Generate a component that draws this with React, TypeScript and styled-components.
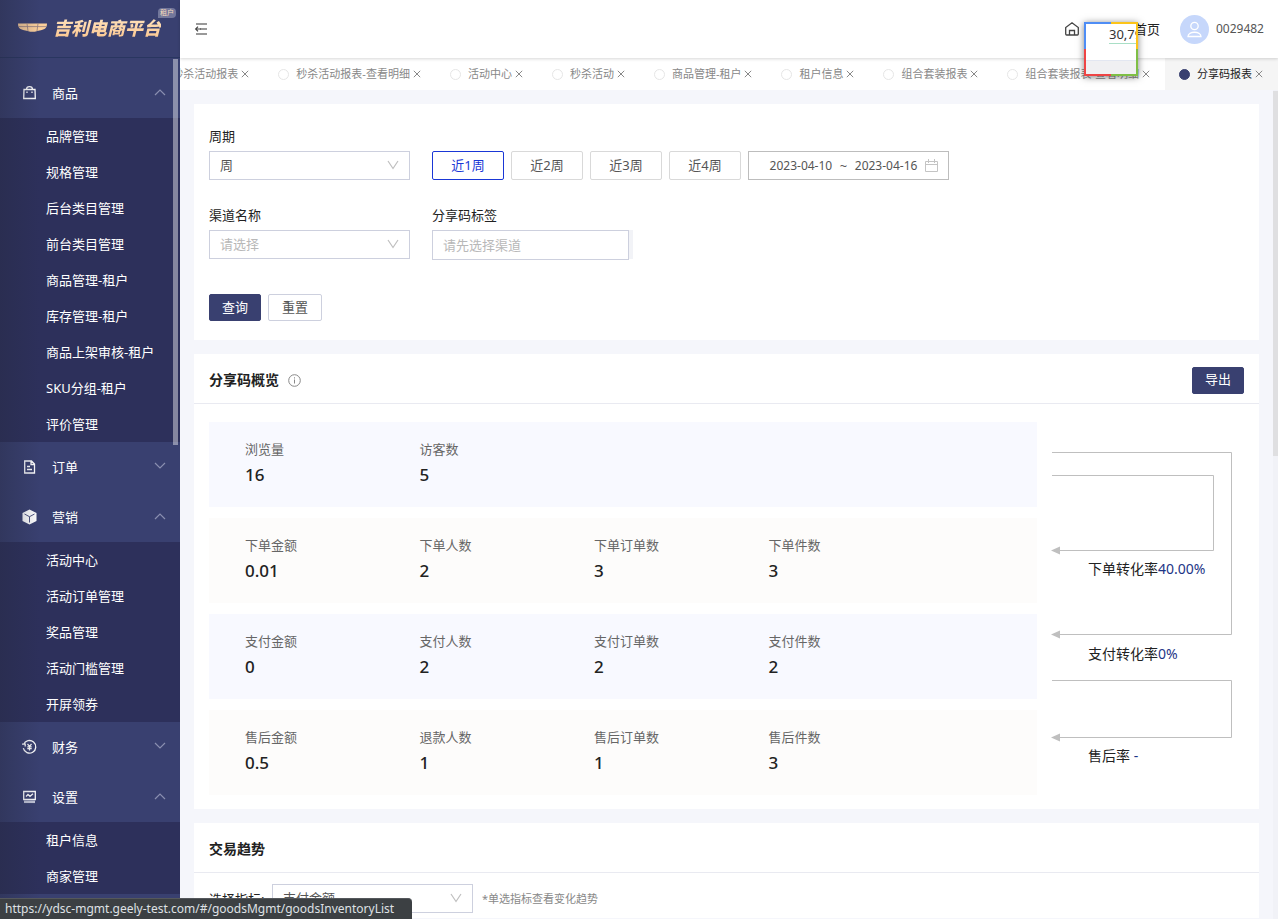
import React from 'react';
import styled, { createGlobalStyle, css } from 'styled-components';

const GlobalStyle = createGlobalStyle`
  *, *::before, *::after { box-sizing: border-box; }
  body {
    margin: 0;
    font-family: "Noto Sans", "Noto Sans CJK SC", sans-serif;
    font-size: 13px;
    line-height: 20px;
    color: #222;
    background: #f5f6fb;
  }
  button, input, select { font: inherit; margin: 0; }
  h1, h2, ul, dl, dd, dt { margin: 0; padding: 0; font: inherit; }
  ul { list-style: none; }
`;

const Shell = styled.div`
  display: flex;
  height: 100vh;
  overflow: hidden;
`;

/* ---------- Sidebar ---------- */

const Sidebar = styled.aside`
  position: relative;
  flex: none;
  width: 180px;
  overflow: hidden;
  background: #394070;
  color: #fff;
  &::after {
    content: "";
    position: absolute;
    inset: 0 auto 0 0;
    width: 40px;
    background: linear-gradient(90deg, rgba(38, 42, 66, 0.4), rgba(38, 42, 66, 0));
    pointer-events: none;
  }
`;

const Brand = styled.div`
  position: relative;
  display: flex;
  align-items: center;
  gap: 5px;
  height: 58px;
  padding: 0 0 2px 17px;
  border-bottom: 1px solid #293660;
`;

const BrandName = styled.h1`
  font-size: 18px;
  line-height: 26px;
  font-weight: 900;
  font-style: italic;
  white-space: nowrap;
  background: linear-gradient(180deg, #ffe6c4, #fbc48b);
  background-clip: text;
  -webkit-background-clip: text;
  color: transparent;
`;

const BrandBadge = styled.span`
  position: absolute;
  top: 8px;
  right: 4px;
  padding: 0 2px;
  border-radius: 4px 4px 4px 0;
  background: #72779b;
  color: #fbdcbb;
  font-size: 7px;
  line-height: 10px;
`;

const Menu = styled.nav`
  padding-top: 10px;
`;

const GroupButton = styled.button`
  display: flex;
  align-items: center;
  width: 100%;
  height: 50px;
  padding: 0 14px 0 22px;
  border: 0;
  background: transparent;
  color: #fff;
  text-align: left;
`;

const GroupName = styled.span`
  flex: 1;
  padding-left: 15px;
`;

const SubMenu = styled.ul`
  background: #2d305b;
`;

const SubLink = styled.a`
  display: block;
  padding-left: 46px;
  line-height: 36px;
  color: #fff;
  text-decoration: none;
  white-space: nowrap;
`;

const ScrollThumb = styled.span<{ $dark?: boolean }>`
  position: absolute;
  z-index: 1;
  width: 5px;
  ${(p) =>
    p.$dark
      ? css`
          top: 1px;
          right: 0;
          height: 44%;
          background: #dfdfe1;
        `
      : css`
          top: 59px;
          right: 2px;
          height: 42%;
          background: rgba(255, 255, 255, 0.42);
        `}
`;

/* ---------- Header and tabs ---------- */

const Page = styled.div`
  display: flex;
  flex: 1;
  flex-direction: column;
  min-width: 0;
`;

const TopBar = styled.header`
  position: relative;
  z-index: 1;
  display: flex;
  flex: none;
  align-items: center;
  height: 58px;
  padding: 0 14px;
  background: #fff;
  box-shadow: 0 1px 3px rgba(0, 0, 0, 0.16);
`;

const IconButton = styled.button`
  display: flex;
  margin-right: auto;
  padding: 0;
  border: 0;
  background: none;
`;

const HomeLink = styled.a`
  display: flex;
  align-items: center;
  justify-content: space-between;
  width: 96px;
  margin-right: 20px;
  color: #222;
  text-decoration: none;
`;

const Avatar = styled.span`
  display: flex;
  align-items: center;
  justify-content: center;
  width: 29px;
  height: 29px;
  margin-right: 7px;
  border-radius: 50%;
  background: #c6d7fb;
`;

const UserName = styled.span`
  font-size: 12px;
  color: #555;
`;

const TabBar = styled.ul`
  display: flex;
  flex: none;
  justify-content: flex-end;
  height: 32px;
  overflow: hidden;
  background: #fff;
`;

const Tab = styled.li<{ $active?: boolean }>`
  display: flex;
  flex: none;
  align-items: center;
  padding: 0 15px 0 14px;
  font-size: 11px;
  color: ${(p) => (p.$active ? '#222' : '#888')};
  background: ${(p) => (p.$active ? '#f5f5f5' : 'transparent')};
  &::before {
    content: "";
    width: 11px;
    height: 11px;
    margin-right: 7px;
    border: 1px solid ${(p) => (p.$active ? '#394070' : '#e6e6e6')};
    border-radius: 50%;
    background: ${(p) => (p.$active ? '#394070' : '#fff')};
  }
`;

const TabClose = styled.button`
  display: flex;
  margin-left: 3px;
  padding: 0;
  border: 0;
  background: none;
`;

/* ---------- Content ---------- */

const ContentFrame = styled.div`
  position: relative;
  flex: 1;
  min-height: 0;
  padding-right: 5px;
  background: #f1f2f7;
`;

const Content = styled.main`
  display: flex;
  flex-direction: column;
  gap: 14px;
  height: 100%;
  padding: 14px;
  overflow: hidden;
  background: #f5f6fb;
`;

const Card = styled.section`
  flex: none;
  background: #fff;
`;

const FilterForm = styled.form`
  display: flex;
  flex-direction: column;
  gap: 25px;
  padding: 22px 15px 19px;
`;

const FieldRow = styled.div`
  display: flex;
  align-items: flex-end;
  gap: 22px;
`;

const Field = styled.div`
  display: flex;
  flex-direction: column;
  gap: 5px;
  width: 201px;
`;

const Label = styled.label`
  color: #222;
`;

const SelectBox = styled.div`
  position: relative;
  width: 201px;
  svg {
    position: absolute;
    top: 9px;
    right: 11px;
    pointer-events: none;
  }
`;

const Select = styled.select<{ $empty?: boolean }>`
  appearance: none;
  display: block;
  width: 100%;
  height: 29px;
  padding: 0 10px 1px;
  border: 1px solid #cdd0de;
  border-radius: 0;
  background: #fff;
  color: ${(p) => (p.$empty ? '#b8b8b8' : '#555')};
`;

const DisabledWrap = styled.div`
  height: 29px;
  padding-right: 4px;
  background: #f2f3f7;
`;

const TextInput = styled.input`
  display: block;
  width: 100%;
  height: 30px;
  padding: 0 10px 1px;
  border: 1px solid #cdd0de;
  border-radius: 0;
  background: #fff;
  &::placeholder { color: #b8b8b8; opacity: 1; }
`;

const QuickRange = styled.div`
  display: flex;
  gap: 7px;
`;

const RangeButton = styled.button<{ $active?: boolean }>`
  width: 72px;
  height: 29px;
  padding: 0 0 2px;
  border: 1px solid ${(p) => (p.$active ? '#1a37d6' : '#d9d9d9')};
  border-radius: 2px;
  background: #fff;
  color: ${(p) => (p.$active ? '#1a37d6' : '#555')};
`;

const DateRange = styled.div`
  display: flex;
  align-items: center;
  width: 201px;
  height: 29px;
  padding: 0 10px 0 13px;
  border: 1px solid #bdbdbd;
  color: #555;
`;

const DateInput = styled.input`
  flex: 1;
  width: 0;
  padding: 0;
  border: 0;
  background: none;
  color: inherit;
  font-size: 12px;
  text-align: center;
`;

const Actions = styled.div`
  display: flex;
  gap: 7px;
  padding-top: 10px;
`;

const ActionButton = styled.button<{ $primary?: boolean }>`
  height: 27px;
  padding: 0 ${(p) => (p.$primary ? 12 : 13)}px 2px;
  border: 1px solid ${(p) => (p.$primary ? '#394070' : '#cdd0de')};
  border-radius: 2px;
  background: ${(p) => (p.$primary ? '#394070' : '#fff')};
  color: ${(p) => (p.$primary ? '#fff' : '#555')};
  line-height: 20px;
`;

const CardHeader = styled.header`
  display: flex;
  align-items: center;
  gap: 9px;
  height: 50px;
  padding: 3px 15px 0;
  border-bottom: 1px solid #e9eaf1;
  ${ActionButton} { margin-left: auto; }
`;

const CardTitle = styled.h2`
  font-size: 14px;
  font-weight: 600;
`;

const Overview = styled.div`
  display: flex;
  gap: 15px;
  padding: 18px 12px 14px 15px;
`;

const StatRows = styled.div`
  display: flex;
  flex: 1;
  flex-direction: column;
  gap: 11px;
`;

const StatRow = styled.dl<{ $warm?: boolean }>`
  display: grid;
  grid-template-columns: repeat(4, 1fr);
  align-content: center;
  height: 85px;
  padding: 0 94px 2px 36px;
  background: ${(p) => (p.$warm ? '#fdfcfb' : '#f8f9ff')};
`;

const StatLabel = styled.dt`
  color: #666;
`;

const StatValue = styled.dd`
  padding-top: 2px;
  font-size: 17px;
  line-height: 28px;
  font-weight: 500;
`;

const Funnel = styled.svg`
  flex: none;
  width: 195px;
  height: 373px;
  overflow: visible;
`;

const TrendForm = styled.div`
  display: flex;
  align-items: center;
  padding: 11px 15px 5px;
`;

const Hint = styled.span`
  padding-left: 9px;
  font-size: 11px;
  color: #888;
`;

const TrendLabel = styled(Label)`
  width: 63px;
`;

/* ---------- Overlays ---------- */

const Magnifier = styled.div`
  position: fixed;
  z-index: 3;
  top: 22px;
  right: 140px;
  width: 54px;
  height: 54px;
  padding: 2px;
  background: conic-gradient(#fcc419 0 25%, #7fbf45 0 50%, #ee4444 0 75%, #4e8df5 0);
  box-shadow: 0 1px 7px rgba(0, 0, 0, 0.5);
`;

const MagnifierView = styled.div`
  height: 50px;
  padding-left: 23px;
  overflow: hidden;
  background: linear-gradient(#fff 36px, #e3e7f1 36px 37px, #f0f0f2 37px);
`;

const MagnifierText = styled.div`
  height: 20px;
  border-bottom: 1px solid #a9dfc6;
  color: #333;
  font-size: 13px;
`;

const StatusBar = styled.div`
  position: fixed;
  z-index: 3;
  bottom: 0;
  left: 0;
  padding: 0 18px 1px 5px;
  border-radius: 0 4px 0 0;
  border-top: 1px solid #55585c;
  background: #3c4043;
  color: #dfe1e5;
  font-size: 12px;
  line-height: 19px;
`;

/* ---------- Icons ---------- */

const Chevron = ({ up, color = '#8a8fb0' }: { up?: boolean; color?: string }) => (
  <svg width="12" height="12" viewBox="0 0 12 12" fill="none" stroke={color} strokeWidth="1.2">
    <path d={up ? 'M1 8 6 3 11 8' : 'M1 2 6 7 11 2'} />
  </svg>
);

const SelectArrow = () => (
  <svg width="12" height="10" viewBox="0 0 12 10" fill="none" stroke="#bfbfbf" strokeWidth="1.2">
    <path d="M1 1 6 8.5 11 1" />
  </svg>
);

const CloseIcon = () => (
  <svg width="8" height="8" viewBox="0 0 8 8" fill="none" stroke="#888" strokeWidth="1">
    <path d="M.8 .8 7.200 7.200M7.200 .8 .8 7.200" />
  </svg>
);

const LogoMark = () => (
  <svg width="31" height="12" viewBox="0 0 31 12">
    <path d="M1 1.5H30C30 5 28.5 7.500 24 8.200 20 8.800 19 9.800 15.500 9.800 12 9.800 11 8.800 7 8.200 2.500 7.500 1 5 1 1.500Z" fill="#fbcf9b" />
    <path d="M1.500 4.600H29.500M10 1.500 11 9M21 1.500 20 9" stroke="#8f7b7d" strokeWidth=".8" fill="none" />
  </svg>
);

const groupIcons: Record<string, React.ReactNode> = {
  goods: (
    <svg width="15" height="16" viewBox="0 0 15 16" fill="none" stroke="#fff" strokeWidth="1.3">
      <path d="M2 4.500H13L13.300 13.500H1.700ZM4.500 4.300C4.500 .700 10.500 .700 10.500 4.300" />
      <path d="M5 6.500V8M10 6.500V8" />
    </svg>
  ),
  order: (
    <svg width="15" height="16" viewBox="0 0 15 16" fill="none" stroke="#fff" strokeWidth="1.300">
      <path d="M2.700 2H9.500L12.500 5V14H2.700ZM9 2V5.500H12.500M5 7.500H8M5 10.500H10" />
    </svg>
  ),
  marketing: (
    <svg width="15" height="16" viewBox="0 0 15 16">
      <path d="M7.500 .500 14.500 4V12L7.500 15.500.500 12V4Z" fill="#fff" />
      <path d="M2.500 5 7.500 7.700 12.500 5M7.500 7.700V13.500" fill="none" stroke="#394070" strokeWidth=".9" />
    </svg>
  ),
  finance: (
    <svg width="15" height="16" viewBox="0 0 15 16" fill="none" stroke="#fff" strokeWidth="1.300">
      <path d="M1.600 5.500A6.300 6.300 0 1 1 1.300 9.200M0 5.200H3.200V7.500" />
      <path d="M5.500 5 7.500 7.300 9.500 5M5.300 7.800H9.700M5.300 9.700H9.700M7.500 7.300V11.500" strokeWidth="1.200" />
    </svg>
  ),
  settings: (
    <svg width="15" height="16" viewBox="0 0 15 16" fill="none" stroke="#fff" strokeWidth="1.300">
      <path d="M1.700 2.500H13.300V10.500H1.700ZM4 7.500 6 5.500 8 7.300 11 4.800" />
      <path d="M2 12.800H13" stroke="#c3c6d8" strokeWidth="2.500" />
    </svg>
  ),
};

/* ---------- Data ---------- */

const menu = [
  {
    name: '商品',
    icon: 'goods',
    items: ['品牌管理', '规格管理', '后台类目管理', '前台类目管理', '商品管理-租户', '库存管理-租户', '商品上架审核-租户', 'SKU分组-租户', '评价管理'],
  },
  { name: '订单', icon: 'order', items: [] },
  { name: '营销', icon: 'marketing', items: ['活动中心', '活动订单管理', '奖品管理', '活动门槛管理', '开屏领券'] },
  { name: '财务', icon: 'finance', items: [] },
  { name: '设置', icon: 'settings', items: ['租户信息', '商家管理'] },
];

const tabs = [
  '秒杀活动报表', '秒杀活动报表-查看明细', '活动中心', '秒杀活动', '商品管理-租户',
  '租户信息', '组合套装报表', '组合套装报表-查看明细', '分享码报表',
];

const ranges = ['近1周', '近2周', '近3周', '近4周'];

const stats: [string, string][][] = [
  [['浏览量', '16'], ['访客数', '5']],
  [['下单金额', '0.01'], ['下单人数', '2'], ['下单订单数', '3'], ['下单件数', '3']],
  [['支付金额', '0'], ['支付人数', '2'], ['支付订单数', '2'], ['支付件数', '2']],
  [['售后金额', '0.5'], ['退款人数', '1'], ['售后订单数', '1'], ['售后件数', '3']],
];

const ConversionFunnel = () => (
  <Funnel viewBox="0 0 195 373" fontSize="14" fill="#222">
    <path
      d="M0 30.500H179.500V212.500H8M0 53.500H161.500V128.500H8M0 258.500H179.500V315.500H8"
      fill="none"
      stroke="#bfbfbf"
    />
    <path d="M-1 128.500 8 124.500V132.500ZM-1 212.500 8 208.500V216.500ZM-1 315.500 8 311.500V319.500Z" fill="#bfbfbf" />
    <text x="36" y="152">下单转化率<tspan fill="#1d3586">40.00%</tspan></text>
    <text x="36" y="237">支付转化率<tspan fill="#1d3586">0%</tspan></text>
    <text x="36" y="339">售后率<tspan fill="#1d3586"> -</tspan></text>
  </Funnel>
);

export default function App() {
  return (
    <>
      <GlobalStyle />
      <Shell>
        <Sidebar>
          <Brand>
            <LogoMark />
            <BrandName>吉利电商平台</BrandName>
            <BrandBadge>租户</BrandBadge>
          </Brand>
          <Menu>
            {menu.map((group) => (
              <div key={group.name}>
                <GroupButton type="button">
                  {groupIcons[group.icon]}
                  <GroupName>{group.name}</GroupName>
                  <Chevron up={group.items.length > 0} />
                </GroupButton>
                {group.items.length > 0 && (
                  <SubMenu>
                    {group.items.map((item) => (
                      <li key={item}>
                        <SubLink href="#">{item}</SubLink>
                      </li>
                    ))}
                  </SubMenu>
                )}
              </div>
            ))}
          </Menu>
          <ScrollThumb />
        </Sidebar>

        <Page>
          <TopBar>
            <IconButton type="button" aria-label="收起菜单">
              <svg width="14" height="14" viewBox="0 0 14 14" fill="none">
                <path d="M2 2H13M6 7H13M2 12H13" stroke="#999" strokeWidth="2" />
                <path d="M1.500 7H7M4 4.700 1.700 7 4 9.300" stroke="#444" strokeWidth="1.200" />
              </svg>
            </IconButton>
            <HomeLink href="#">
              <svg width="16" height="16" viewBox="0 0 16 16" fill="none" stroke="#444" strokeWidth="1.300">
                <path d="M1.700 13V6.500L8 1.800 14.300 6.500V13Q14.300 14 13.300 14H2.700Q1.700 14 1.700 13ZM5.500 14V9.500H10.500V14" />
              </svg>
              首页
            </HomeLink>
            <Avatar>
              <svg width="17" height="17" viewBox="0 0 17 17" fill="none" stroke="#fff" strokeWidth="1.300">
                <circle cx="8.500" cy="5" r="3.700" />
                <path d="M2 15.500C2 9.800 15 9.800 15 15.500Z" />
              </svg>
            </Avatar>
            <UserName>0029482</UserName>
          </TopBar>

          <TabBar>
            {tabs.map((tab, i) => (
              <Tab key={tab} $active={i === tabs.length - 1}>
                {tab}
                <TabClose type="button" aria-label="关闭">
                  <CloseIcon />
                </TabClose>
              </Tab>
            ))}
          </TabBar>

          <ContentFrame>
            <Content>
              <Card>
                <FilterForm>
                  <FieldRow>
                    <Field>
                      <Label htmlFor="period">周期</Label>
                      <SelectBox>
                        <Select id="period">
                          <option>周</option>
                        </Select>
                        <SelectArrow />
                      </SelectBox>
                    </Field>
                    <QuickRange>
                      {ranges.map((r, i) => (
                        <RangeButton key={r} type="button" $active={i === 0}>
                          {r}
                        </RangeButton>
                      ))}
                      <DateRange>
                        <DateInput aria-label="开始日期" defaultValue="2023-04-10" />
                        ~
                        <DateInput aria-label="结束日期" defaultValue="2023-04-16" />
                        <svg width="13" height="13" viewBox="0 0 13 13" fill="none" stroke="#c4c4c4">
                          <path d="M.500 2.500H12.500V12.500H.500ZM.500 5.500H12.500M3.500 0V4M9.500 0V4" />
                        </svg>
                      </DateRange>
                    </QuickRange>
                  </FieldRow>
                  <FieldRow>
                    <Field>
                      <Label htmlFor="channel">渠道名称</Label>
                      <SelectBox>
                        <Select id="channel" $empty>
                          <option>请选择</option>
                        </Select>
                        <SelectArrow />
                      </SelectBox>
                    </Field>
                    <Field>
                      <Label htmlFor="tag">分享码标签</Label>
                      <DisabledWrap>
                        <TextInput id="tag" placeholder="请先选择渠道" />
                      </DisabledWrap>
                    </Field>
                  </FieldRow>
                  <Actions>
                    <ActionButton type="button" $primary>查询</ActionButton>
                    <ActionButton type="button">重置</ActionButton>
                  </Actions>
                </FilterForm>
              </Card>

              <Card>
                <CardHeader>
                  <CardTitle>分享码概览</CardTitle>
                  <svg width="13" height="13" viewBox="0 0 13 13" fill="none" stroke="#888">
                    <circle cx="6.500" cy="6.500" r="5.800" />
                    <path d="M6.500 5.500V9.500M6.500 3.300V4.500" />
                  </svg>
                  <ActionButton type="button" $primary>导出</ActionButton>
                </CardHeader>
                <Overview>
                  <StatRows>
                    {stats.map((row, i) => (
                      <StatRow key={i} $warm={i % 2 === 1}>
                        {row.map(([label, value]) => (
                          <div key={label}>
                            <StatLabel>{label}</StatLabel>
                            <StatValue>{value}</StatValue>
                          </div>
                        ))}
                      </StatRow>
                    ))}
                  </StatRows>
                  <ConversionFunnel />
                </Overview>
              </Card>

              <Card>
                <CardHeader>
                  <CardTitle>交易趋势</CardTitle>
                </CardHeader>
                <TrendForm>
                  <TrendLabel htmlFor="metric">选择指标:</TrendLabel>
                  <SelectBox>
                    <Select id="metric">
                      <option>支付金额</option>
                    </Select>
                    <SelectArrow />
                  </SelectBox>
                  <Hint>*单选指标查看变化趋势</Hint>
                </TrendForm>
              </Card>
            </Content>
            <ScrollThumb $dark />
          </ContentFrame>
        </Page>
      </Shell>

      <Magnifier>
        <MagnifierView>
          <MagnifierText>30,79</MagnifierText>
        </MagnifierView>
      </Magnifier>
      <StatusBar>https://ydsc-mgmt.geely-test.com/#/goodsMgmt/goodsInventoryList</StatusBar>
    </>
  );
}
